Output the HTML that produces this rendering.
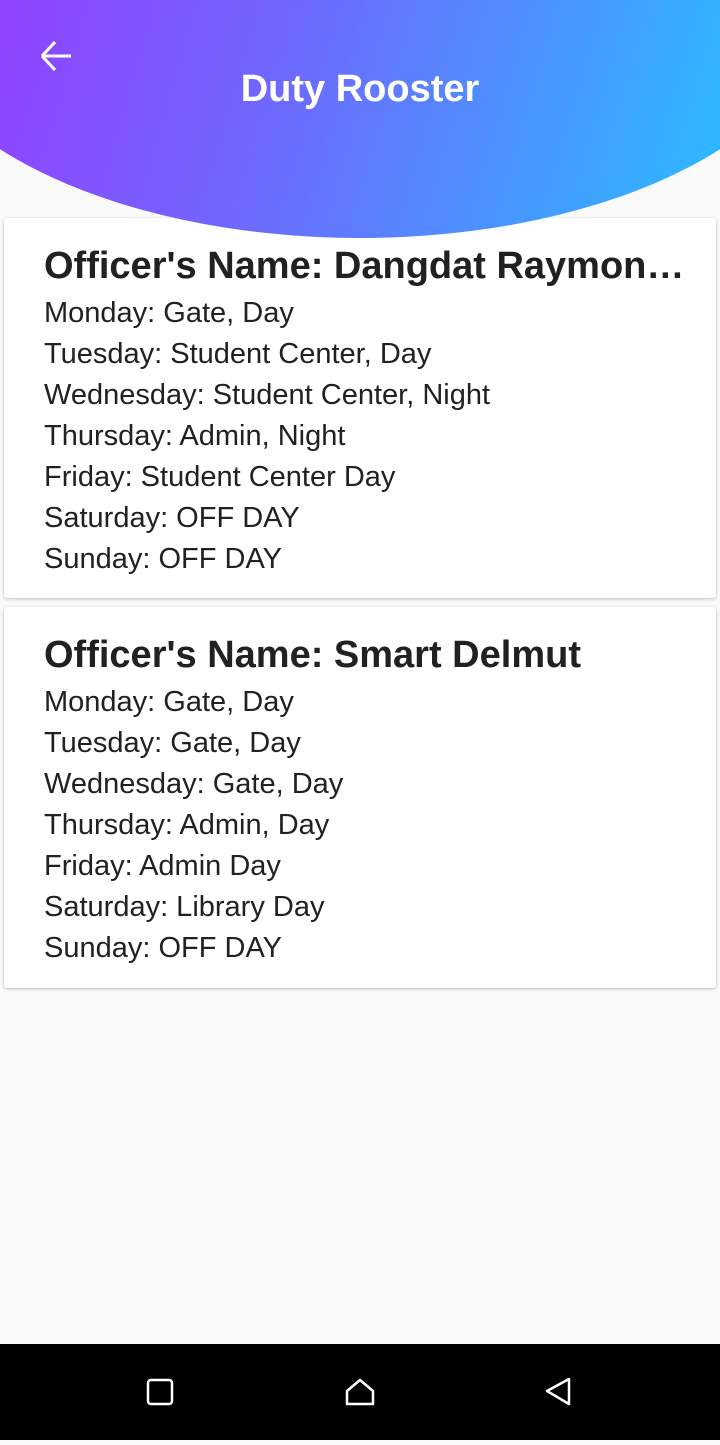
<!DOCTYPE html>
<html><head><meta charset="utf-8"><style>
body{margin:0;width:720px;height:1440px;background:#fafafa;font-family:"Liberation Sans",sans-serif;position:relative;overflow:hidden}
.hdr{position:absolute;left:0;top:0;z-index:2}
.title{position:absolute;top:68px;left:0;width:720px;text-align:center;color:#fff;font-weight:bold;font-size:38px;z-index:3}
.card{position:absolute;left:4px;width:712px;background:#fff;border-radius:3px;box-shadow:0 1px 3px rgba(0,0,0,.25)}
.card h2{margin:0;position:absolute;left:40px;top:27px;font-size:38px;font-weight:bold;color:#212121;white-space:nowrap;width:646px;overflow:hidden;text-overflow:ellipsis}
.card .l{position:absolute;left:40px;font-size:29px;color:#212121;white-space:nowrap}
.nav{position:absolute;left:0;top:1344px;width:720px;height:96px;background:#000}
</style></head><body>
<svg class="hdr" width="720" height="240"><defs><linearGradient id="g" x1="0" x2="1" y1="0" y2="0.15"><stop offset="0" stop-color="#a52cff"/><stop offset="0.5" stop-color="#6f68ff"/><stop offset="1" stop-color="#2cb9ff"/></linearGradient></defs>
<ellipse cx="360" cy="0" rx="462" ry="238" fill="url(#g)"/>
<path d="M71 56H42M42 56L55 42M42 56L55 70" stroke="#fff" stroke-width="3" fill="none"/></svg>
<div class="title">Duty Rooster</div>
<div class="card" style="top:218px;height:380px">
<h2>Officer's Name: Dangdat Raymond Dung</h2>
<div class="l" style="top:79px">Monday: Gate, Day</div>
<div class="l" style="top:120px">Tuesday: Student Center, Day</div>
<div class="l" style="top:161px">Wednesday: Student Center, Night</div>
<div class="l" style="top:202px">Thursday: Admin, Night</div>
<div class="l" style="top:243px">Friday: Student Center Day</div>
<div class="l" style="top:284px">Saturday: OFF DAY</div>
<div class="l" style="top:325px">Sunday: OFF DAY</div>
</div>
<div class="card" style="top:607px;height:381px">
<h2>Officer's Name: Smart Delmut</h2>
<div class="l" style="top:79px">Monday: Gate, Day</div>
<div class="l" style="top:120px">Tuesday: Gate, Day</div>
<div class="l" style="top:161px">Wednesday: Gate, Day</div>
<div class="l" style="top:202px">Thursday: Admin, Day</div>
<div class="l" style="top:243px">Friday: Admin Day</div>
<div class="l" style="top:284px">Saturday: Library Day</div>
<div class="l" style="top:325px">Sunday: OFF DAY</div>
</div>
<div class="nav"><svg width="720" height="96">
<rect x="148" y="36" width="24" height="24" rx="3" stroke="#fff" stroke-width="2.5" fill="none"/>
<path d="M347 47L360 36L373 47V60H347Z" stroke="#fff" stroke-width="2.5" fill="none" stroke-linejoin="round"/>
<path d="M569 35V60L547 47Z" stroke="#fff" stroke-width="2.5" fill="none" stroke-linejoin="round"/>
</svg></div>
</body></html>
